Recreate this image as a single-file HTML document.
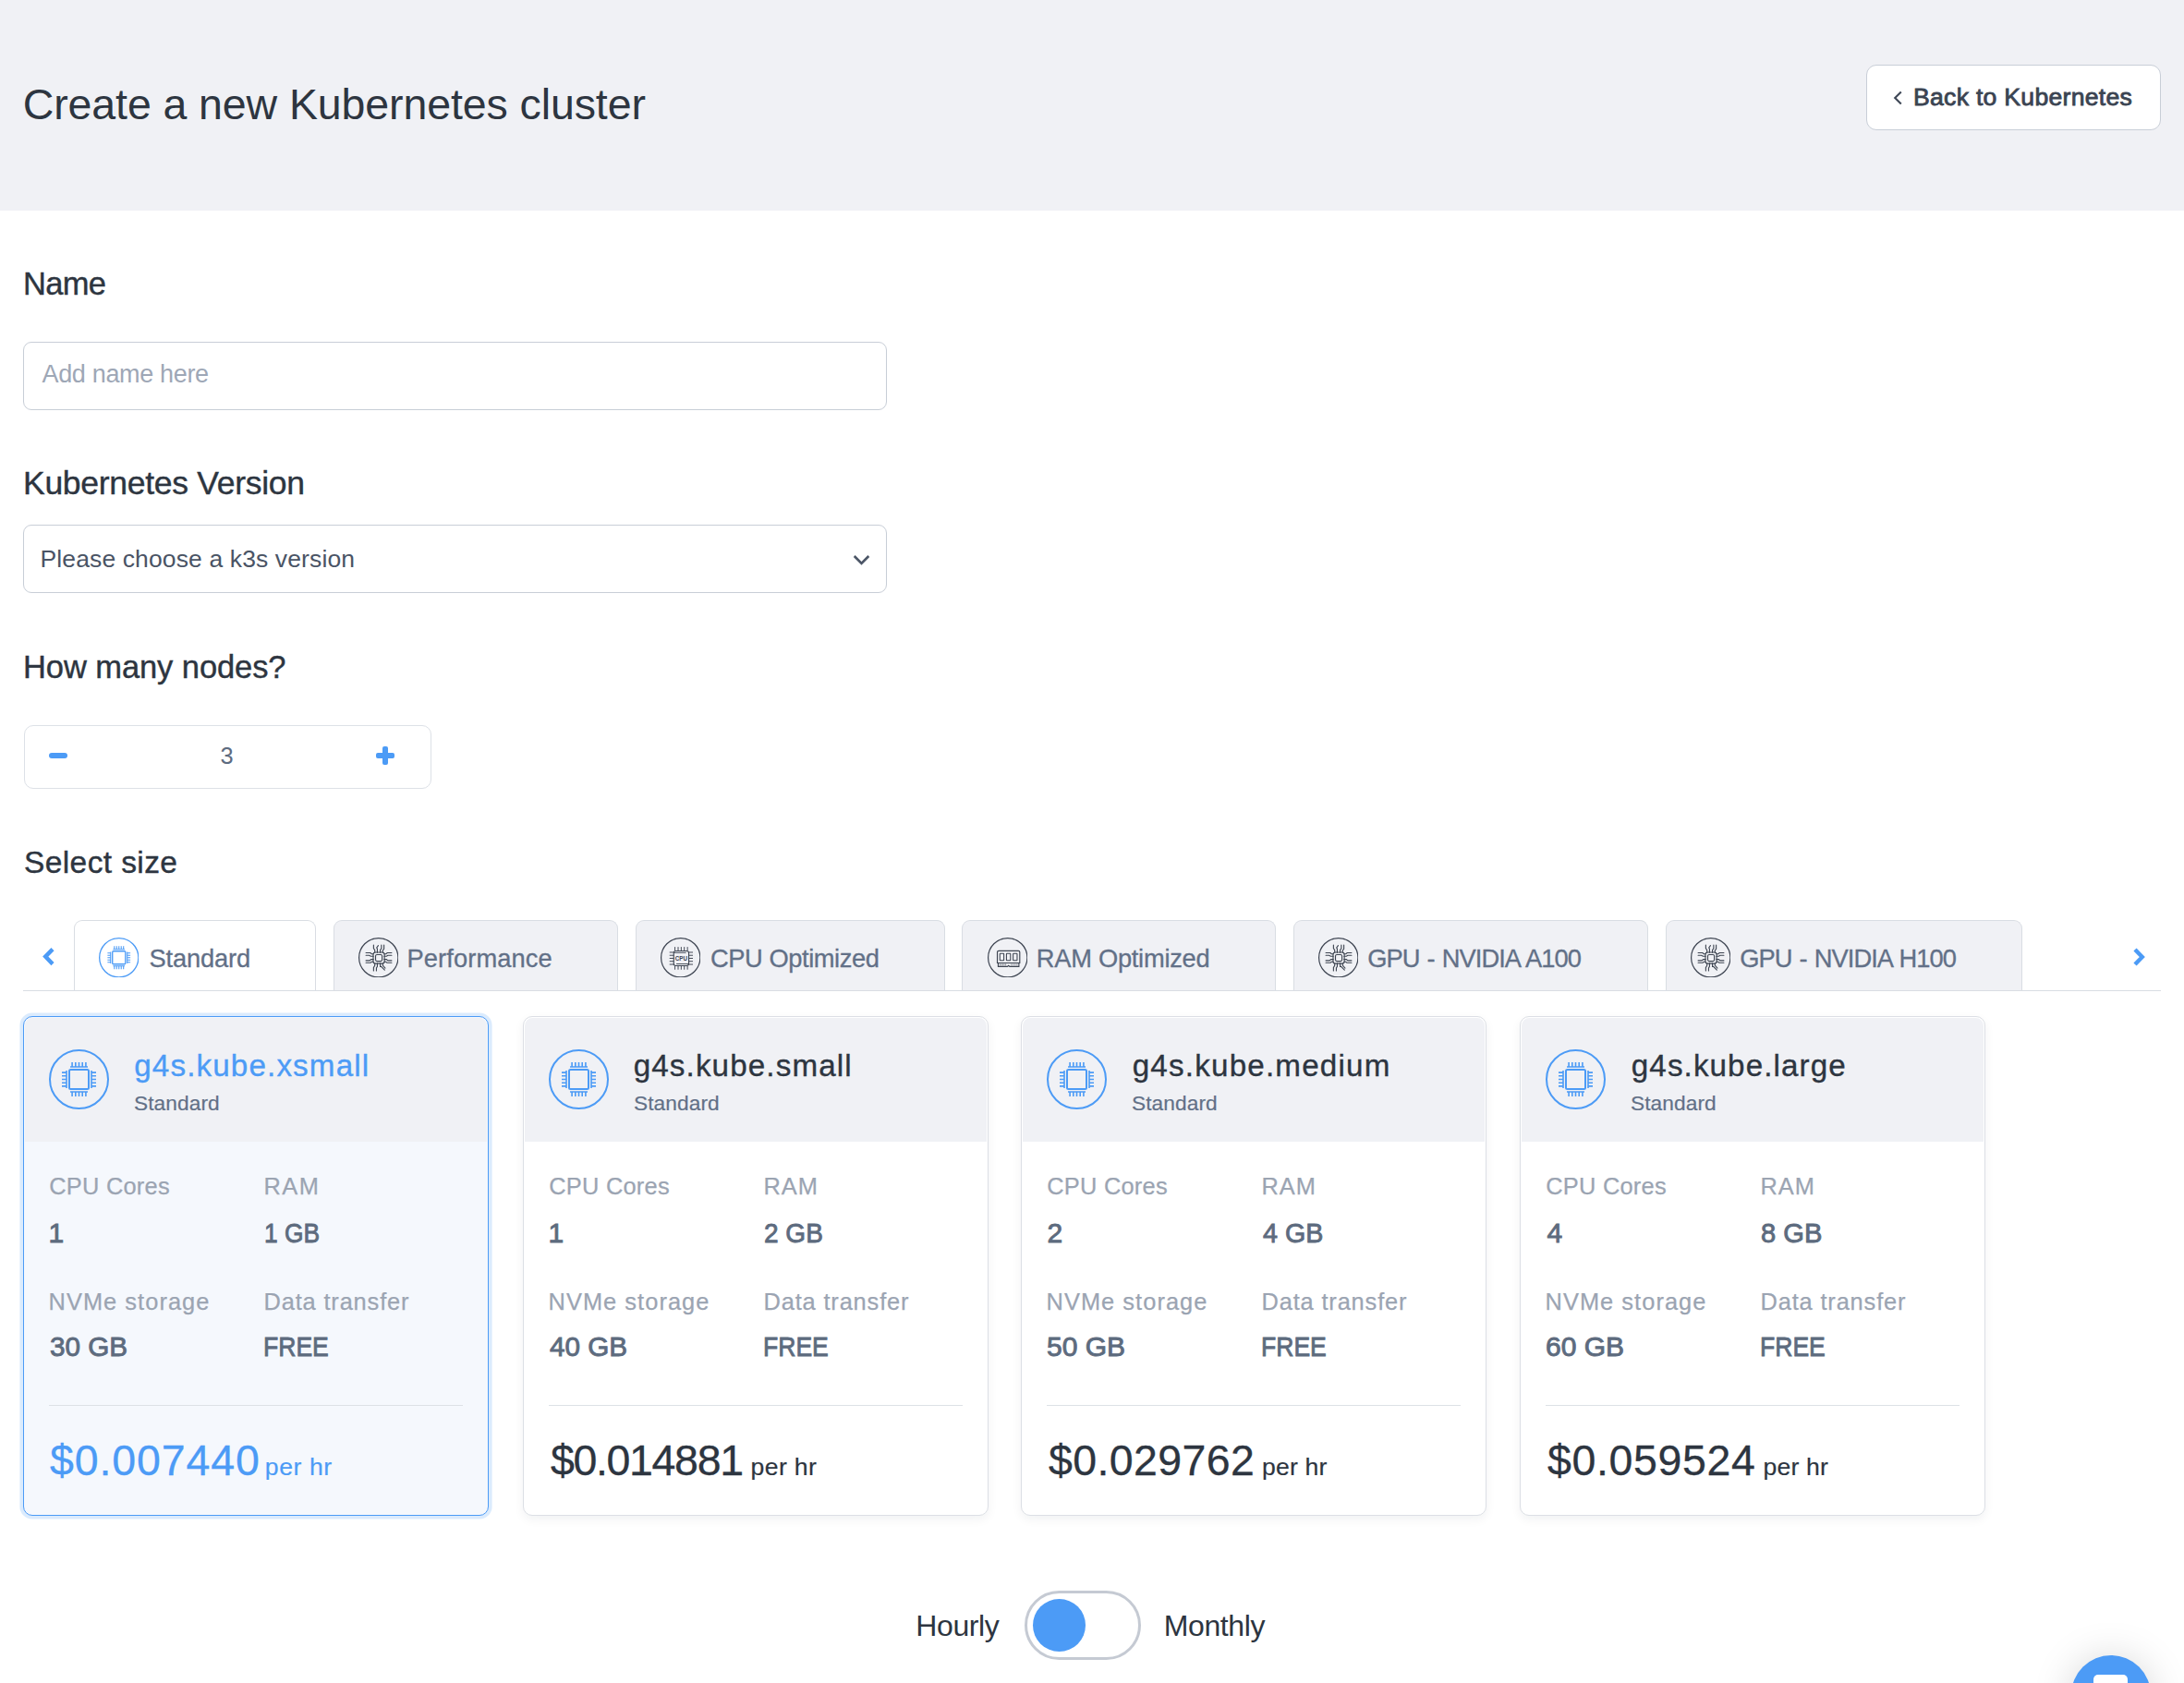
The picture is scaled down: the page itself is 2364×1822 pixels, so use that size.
<!DOCTYPE html>
<html><head><meta charset="utf-8"><title>Create a new Kubernetes cluster</title>
<style>
html,body{margin:0;padding:0;}
body{width:2364px;height:1822px;overflow:hidden;background:#ffffff;position:relative;font-family:"Liberation Sans",sans-serif;}
.a{position:absolute;box-sizing:border-box;}
.t{position:absolute;line-height:1;white-space:nowrap;}
</style></head><body>
<div class="a" style="left:0.00px;top:0.00px;width:2364.00px;height:228.00px;background:#f0f1f5;"></div>
<div class="t" id="title" style="left:24.70px;top:89.94px;font-size:46.50px;color:#2d3540;letter-spacing:-0.100px;">Create a new Kubernetes cluster</div>
<div class="a" style="left:2020.00px;top:70.00px;width:318.50px;height:71.00px;background:#fff;border:1.5px solid #c8ced7;border-radius:11px;"></div>
<svg class="a" style="left:2044px;top:94px" width="20" height="24" viewBox="0 0 20 24"><path d="M13.8 5.6 L7.2 12 L13.8 18.4" fill="none" stroke="#3e4756" stroke-width="2.1"/></svg>
<div class="t" id="btn" style="left:2071.00px;top:91.68px;font-size:26.60px;color:#3b4452;letter-spacing:0.282px;-webkit-text-stroke:0.85px #3b4452;">Back to Kubernetes</div>
<div class="t" id="name" style="left:25.00px;top:290.30px;font-size:34.50px;color:#2d3540;letter-spacing:-0.667px;-webkit-text-stroke:0.4px #2d3540;">Name</div>
<div class="a" style="left:25.00px;top:370.00px;width:935.00px;height:74.00px;background:#fff;border:1.5px solid #c8ced7;border-radius:9px;"></div>
<div class="t" id="ph" style="left:45.50px;top:392.14px;font-size:27.00px;color:#9ea7b6;letter-spacing:-0.333px;">Add name here</div>
<div class="t" id="kv" style="left:25.00px;top:505.70px;font-size:35.50px;color:#2d3540;letter-spacing:-0.282px;-webkit-text-stroke:0.4px #2d3540;">Kubernetes Version</div>
<div class="a" style="left:25.00px;top:568.00px;width:935.00px;height:73.50px;background:#fff;border:1.5px solid #c8ced7;border-radius:9px;"></div>
<div class="t" id="sel" style="left:43.50px;top:591.57px;font-size:26.50px;color:#4a5465;letter-spacing:0.123px;">Please choose a k3s version</div>
<svg class="a" style="left:920px;top:596px" width="24" height="20" viewBox="0 0 24 20"><path d="M4.7 6 L12.5 14 L20.3 6" fill="none" stroke="#4b5566" stroke-width="2.6"/></svg>
<div class="t" id="nodes" style="left:25.00px;top:704.55px;font-size:34.50px;color:#2d3540;letter-spacing:-0.086px;-webkit-text-stroke:0.4px #2d3540;">How many nodes?</div>
<div class="a" style="left:25.50px;top:784.50px;width:441.00px;height:69.00px;background:#fff;border:1.5px solid #dde1e7;border-radius:10px;"></div>
<div class="a" style="left:53.00px;top:814.50px;width:20.00px;height:6.80px;background:#4c9bf6;border-radius:3px;"></div>
<div class="t" id="three" style="left:238.50px;top:806.00px;font-size:25.40px;color:#5d6b80;">3</div>
<div class="a" style="left:407.00px;top:814.70px;width:20.00px;height:6.40px;background:#4c9bf6;border-radius:2px;"></div>
<div class="a" style="left:413.80px;top:808.00px;width:6.40px;height:19.50px;background:#4c9bf6;border-radius:2px;"></div>
<div class="t" id="selsize" style="left:26.00px;top:916.64px;font-size:33.50px;color:#2d3540;letter-spacing:0.400px;-webkit-text-stroke:0.4px #2d3540;">Select size</div>
<div class="a" style="left:25.00px;top:1071.50px;width:2314.00px;height:1.50px;background:#d9dde3;"></div>
<div class="a" style="left:79.50px;top:996.00px;width:262.25px;height:75.50px;background:#ffffff;border:1.5px solid #d9dde3;border-bottom:none;border-radius:9px 9px 0 0;"></div>
<svg class="a" style="left:106.75px;top:1014.75px" width="43.50" height="43.50" viewBox="0 0 65 65" stroke="#4c9bf6"><circle cx="32.5" cy="32.5" r="31.5" fill="none" stroke-width="2"/><rect x="22" y="22" width="21" height="21" rx="1.5" fill="none" stroke-width="2"/><path d="M23 19 H42 M23 46 H42 M19 23 V42 M46 23 V42" stroke-width="1.6" fill="none"/><path d="M25.1 14 V19 M25.1 46 V51 M14 25.1 H19 M46 25.1 H51 M28.8 14 V19 M28.8 46 V51 M14 28.8 H19 M46 28.8 H51 M32.5 14 V19 M32.5 46 V51 M14 32.5 H19 M46 32.5 H51 M36.2 14 V19 M36.2 46 V51 M14 36.2 H19 M46 36.2 H51 M39.9 14 V19 M39.9 46 V51 M14 39.9 H19 M46 39.9 H51 " stroke-width="1.6" fill="none"/></svg>
<div class="t" id="tab0" style="left:161.50px;top:1024.39px;font-size:27.30px;color:#627087;letter-spacing:-0.171px;-webkit-text-stroke:0.3px #627087;">Standard</div>
<div class="a" style="left:360.50px;top:996.00px;width:308.25px;height:75.50px;background:#f0f1f5;border:1.5px solid #d9dde3;border-bottom:none;border-radius:9px 9px 0 0;"></div>
<svg class="a" style="left:387.75px;top:1014.75px" width="43.50" height="43.50" viewBox="0 0 43 43" stroke="#3d4451"><circle cx="21.5" cy="21.5" r="20.9" fill="none" stroke-width="1.2"/><rect x="15.8" y="15.8" width="12" height="12" rx="2.2" fill="none" stroke-width="1.1"/><rect x="18.3" y="18.3" width="7" height="7" rx="1.5" fill="none" stroke-width="1.1"/><path d="M17.5 16 V13.5 L16.2 11.5 V8 M20.2 16 V12 L19.5 10.8 L21.2 8.5 M23.3 16 V13.2 L24.6 11.6 V8 M26 16 V13.8 L27.3 12.2 V8 M17.5 27.5 V30 L16.2 32 V35.5 M20.2 27.5 V31 L19.2 32.5 V35.5 M23.3 27.5 V31 H24.3 L28 34.8 M26 27.5 V29.8 L28.6 32.8 M16 17.5 H14 L12.8 16.3 H8 M16 20 H13.2 L11.5 19 H8 M16 23.3 H13.5 L12 24.6 H8 M16 26 H14 L13 27 H8 M27.5 17.5 H29.5 L30.8 16.3 H35.5 M27.5 20 H30 L31.5 19 H35.5 M27.5 23.3 H30 L31.5 24.6 H35.5 M27.5 26 H29.5 L30.5 27 H35.5 " fill="none" stroke-width="1.1" stroke-linecap="round"/></svg>
<div class="t" id="tab1" style="left:440.50px;top:1024.39px;font-size:27.30px;color:#627087;letter-spacing:0.100px;-webkit-text-stroke:0.3px #627087;">Performance</div>
<div class="a" style="left:687.50px;top:996.00px;width:335.00px;height:75.50px;background:#f0f1f5;border:1.5px solid #d9dde3;border-bottom:none;border-radius:9px 9px 0 0;"></div>
<svg class="a" style="left:714.75px;top:1014.75px" width="43.50" height="43.50" viewBox="0 0 43 43" stroke="#3d4451"><circle cx="21.5" cy="21.5" r="20.9" fill="none" stroke-width="1.2"/><rect x="14.1" y="14.3" width="16.1" height="15.8" rx="2.2" fill="none" stroke-width="1.1"/><path d="M14.6 16.2 H27.3 M16.9 28.2 H29.8" fill="none" stroke-width="0.9"/><path d="M15.4 10 V14 M15.4 30.3 V34.3 M18.8 10 V14 M18.8 30.3 V34.3 M22.1 10 V14 M22.1 30.3 V34.3 M25.4 10 V14 M25.4 30.3 V34.3 M28.8 10 V14 M28.8 30.3 V34.3 M9.6 15.8 H14 M30.2 15.8 H34.6 M9.6 19.0 H14 M30.2 19.0 H34.6 M9.6 22.2 H14 M30.2 22.2 H34.6 M9.6 25.4 H14 M30.2 25.4 H34.6 M9.6 28.7 H14 M30.2 28.7 H34.6 " fill="none" stroke-width="0.95"/><text x="22.2" y="24.3" text-anchor="middle" font-family="Liberation Sans" font-weight="700" font-size="6.2" fill="#3d4451" stroke="none">CPU</text></svg>
<div class="t" id="tab2" style="left:769.00px;top:1024.39px;font-size:27.30px;color:#627087;letter-spacing:-0.433px;-webkit-text-stroke:0.3px #627087;">CPU Optimized</div>
<div class="a" style="left:1041.25px;top:996.00px;width:339.50px;height:75.50px;background:#f0f1f5;border:1.5px solid #d9dde3;border-bottom:none;border-radius:9px 9px 0 0;"></div>
<svg class="a" style="left:1068.50px;top:1014.75px" width="43.50" height="43.50" viewBox="0 0 43 43" stroke="#3d4451"><circle cx="21.5" cy="21.5" r="20.9" fill="none" stroke-width="1.2"/><path d="M10.4 27.2 V15.6 Q10.4 14.2 11.9 14.2 H33 Q34.4 14.2 34.4 15.6 V27.2 Z" fill="none" stroke-width="1.15"/><rect x="13.1" y="17.1" width="4.3" height="7.3" rx="0.4" fill="none" stroke-width="1.05"/><rect x="20.2" y="17.1" width="4.3" height="7.3" rx="0.4" fill="none" stroke-width="1.05"/><rect x="27.3" y="17.1" width="4.3" height="7.3" rx="0.4" fill="none" stroke-width="1.05"/><path d="M11.3 27.4 V31 H21.2 L22.4 29.9 L23.6 31 H33.5 V27.4" fill="none" stroke-width="1.1"/><path d="M13 28.2 V30 M14.6 28.2 V30 M16.2 28.2 V30 M17.8 28.2 V30 M19.4 28.2 V30 M25.5 28.2 V30 M27.5 28.2 V30 M29.5 28.2 V30 M31.5 28.2 V30" fill="none" stroke-width="0.6"/></svg>
<div class="t" id="tab3" style="left:1121.75px;top:1024.39px;font-size:27.30px;color:#627087;letter-spacing:-0.267px;-webkit-text-stroke:0.3px #627087;">RAM Optimized</div>
<div class="a" style="left:1399.50px;top:996.00px;width:384.25px;height:75.50px;background:#f0f1f5;border:1.5px solid #d9dde3;border-bottom:none;border-radius:9px 9px 0 0;"></div>
<svg class="a" style="left:1426.75px;top:1014.75px" width="43.50" height="43.50" viewBox="0 0 43 43" stroke="#3d4451"><circle cx="21.5" cy="21.5" r="20.9" fill="none" stroke-width="1.2"/><rect x="15.8" y="15.8" width="12" height="12" rx="2.2" fill="none" stroke-width="1.1"/><rect x="18.3" y="18.3" width="7" height="7" rx="1.5" fill="none" stroke-width="1.1"/><path d="M17.5 16 V13.5 L16.2 11.5 V8 M20.2 16 V12 L19.5 10.8 L21.2 8.5 M23.3 16 V13.2 L24.6 11.6 V8 M26 16 V13.8 L27.3 12.2 V8 M17.5 27.5 V30 L16.2 32 V35.5 M20.2 27.5 V31 L19.2 32.5 V35.5 M23.3 27.5 V31 H24.3 L28 34.8 M26 27.5 V29.8 L28.6 32.8 M16 17.5 H14 L12.8 16.3 H8 M16 20 H13.2 L11.5 19 H8 M16 23.3 H13.5 L12 24.6 H8 M16 26 H14 L13 27 H8 M27.5 17.5 H29.5 L30.8 16.3 H35.5 M27.5 20 H30 L31.5 19 H35.5 M27.5 23.3 H30 L31.5 24.6 H35.5 M27.5 26 H29.5 L30.5 27 H35.5 " fill="none" stroke-width="1.1" stroke-linecap="round"/></svg>
<div class="t" id="tab4" style="left:1480.25px;top:1024.39px;font-size:27.30px;color:#627087;letter-spacing:-0.975px;-webkit-text-stroke:0.3px #627087;word-spacing:1.5px;">GPU - NVIDIA A100</div>
<div class="a" style="left:1802.50px;top:996.00px;width:386.25px;height:75.50px;background:#f0f1f5;border:1.5px solid #d9dde3;border-bottom:none;border-radius:9px 9px 0 0;"></div>
<svg class="a" style="left:1829.75px;top:1014.75px" width="43.50" height="43.50" viewBox="0 0 43 43" stroke="#3d4451"><circle cx="21.5" cy="21.5" r="20.9" fill="none" stroke-width="1.2"/><rect x="15.8" y="15.8" width="12" height="12" rx="2.2" fill="none" stroke-width="1.1"/><rect x="18.3" y="18.3" width="7" height="7" rx="1.5" fill="none" stroke-width="1.1"/><path d="M17.5 16 V13.5 L16.2 11.5 V8 M20.2 16 V12 L19.5 10.8 L21.2 8.5 M23.3 16 V13.2 L24.6 11.6 V8 M26 16 V13.8 L27.3 12.2 V8 M17.5 27.5 V30 L16.2 32 V35.5 M20.2 27.5 V31 L19.2 32.5 V35.5 M23.3 27.5 V31 H24.3 L28 34.8 M26 27.5 V29.8 L28.6 32.8 M16 17.5 H14 L12.8 16.3 H8 M16 20 H13.2 L11.5 19 H8 M16 23.3 H13.5 L12 24.6 H8 M16 26 H14 L13 27 H8 M27.5 17.5 H29.5 L30.8 16.3 H35.5 M27.5 20 H30 L31.5 19 H35.5 M27.5 23.3 H30 L31.5 24.6 H35.5 M27.5 26 H29.5 L30.5 27 H35.5 " fill="none" stroke-width="1.1" stroke-linecap="round"/></svg>
<div class="t" id="tab5" style="left:1883.25px;top:1024.39px;font-size:27.30px;color:#627087;letter-spacing:-0.975px;-webkit-text-stroke:0.3px #627087;word-spacing:1.5px;">GPU - NVIDIA H100</div>
<svg class="a" style="left:40px;top:1020px" width="26" height="32" viewBox="0 0 26 32"><path d="M17 7.6 L9.2 15.6 L17 23.6" fill="none" stroke="#4c9bf6" stroke-width="4.4"/></svg>
<svg class="a" style="left:2302px;top:1020px" width="26" height="32" viewBox="0 0 26 32"><path d="M9 8 L16.8 16 L9 24" fill="none" stroke="#4c9bf6" stroke-width="4.4"/></svg>
<div class="a" style="left:25.00px;top:1100.00px;width:503.60px;height:540.70px;background:#f5f8fd;border:1.5px solid #4c9bf6;border-radius:10px;box-shadow:0 0 0 3.6px rgba(76,155,246,0.2);"></div>
<div class="a" style="left:26.50px;top:1101.50px;width:500.60px;height:134.20px;background:#f0f1f5;border-radius:8.5px 8.5px 0 0;"></div>
<svg class="a" style="left:52.95px;top:1135.85px" width="65.00" height="65.00" viewBox="0 0 65 65" stroke="#4c9bf6"><circle cx="32.5" cy="32.5" r="31.5" fill="none" stroke-width="2"/><rect x="22" y="22" width="21" height="21" rx="1.5" fill="none" stroke-width="2"/><path d="M23 19 H42 M23 46 H42 M19 23 V42 M46 23 V42" stroke-width="1.6" fill="none"/><path d="M25.1 14 V19 M25.1 46 V51 M14 25.1 H19 M46 25.1 H51 M28.8 14 V19 M28.8 46 V51 M14 28.8 H19 M46 28.8 H51 M32.5 14 V19 M32.5 46 V51 M14 32.5 H19 M46 32.5 H51 M36.2 14 V19 M36.2 46 V51 M14 36.2 H19 M46 36.2 H51 M39.9 14 V19 M39.9 46 V51 M14 39.9 H19 M46 39.9 H51 " stroke-width="1.6" fill="none"/></svg>
<div class="t" id="c0title" style="left:145.25px;top:1136.90px;font-size:33.20px;color:#4c9bf6;letter-spacing:1.136px;-webkit-text-stroke:0.35px #4c9bf6;">g4s.kube.xsmall</div>
<div class="t" id="c0sub" style="left:145.00px;top:1182.78px;font-size:22.70px;color:#627087;letter-spacing:0.086px;-webkit-text-stroke:0.2px #627087;">Standard</div>
<div class="t" id="c0l1" style="left:53.25px;top:1272.25px;font-size:25.40px;color:#9ba4b2;letter-spacing:0.250px;-webkit-text-stroke:0.25px #9ba4b2;">CPU Cores</div>
<div class="t" id="c0l2" style="left:285.50px;top:1272.25px;font-size:25.40px;color:#9ba4b2;letter-spacing:1.500px;-webkit-text-stroke:0.25px #9ba4b2;">RAM</div>
<div class="t" id="c0v1" style="left:52.50px;top:1319.61px;font-size:30.00px;color:#5d6b7e;-webkit-text-stroke:0.9px #5d6b7e;">1</div>
<div class="t" id="c0v2" style="left:286.00px;top:1319.61px;font-size:30.00px;color:#5d6b7e;-webkit-text-stroke:0.9px #5d6b7e;transform:scaleX(0.8788);transform-origin:0 0;">1 GB</div>
<div class="t" id="c0l3" style="left:52.50px;top:1396.50px;font-size:25.40px;color:#9ba4b2;letter-spacing:1.055px;-webkit-text-stroke:0.25px #9ba4b2;">NVMe storage</div>
<div class="t" id="c0l4" style="left:285.50px;top:1396.50px;font-size:25.40px;color:#9ba4b2;letter-spacing:0.850px;-webkit-text-stroke:0.25px #9ba4b2;">Data transfer</div>
<div class="t" id="c0v3" style="left:54.00px;top:1443.36px;font-size:30.00px;color:#5d6b7e;-webkit-text-stroke:0.9px #5d6b7e;transform:scaleX(0.9881);transform-origin:0 0;">30 GB</div>
<div class="t" id="c0v4" style="left:285.00px;top:1443.36px;font-size:30.00px;color:#5d6b7e;-webkit-text-stroke:0.9px #5d6b7e;transform:scaleX(0.8848);transform-origin:0 0;">FREE</div>
<div class="a" style="left:53.00px;top:1520.50px;width:447.50px;height:1.50px;background:#dde1e6;"></div>
<div class="t" id="c0price" style="left:54.00px;top:1557.74px;font-size:46.50px;color:#4c9bf6;letter-spacing:0.875px;-webkit-text-stroke:0.3px #4c9bf6;">$0.007440</div>
<div class="t" id="c0perhr" style="left:286.75px;top:1574.58px;font-size:26.60px;color:#4c9bf6;letter-spacing:0.600px;-webkit-text-stroke:0.2px #4c9bf6;">per hr</div>
<div class="a" style="left:566.00px;top:1100.00px;width:503.60px;height:540.70px;background:#fff;border:1.5px solid #dcdfe5;border-radius:10px;box-shadow:0 4px 11px rgba(20,30,50,0.06);"></div>
<div class="a" style="left:567.50px;top:1101.50px;width:500.60px;height:134.20px;background:#f0f1f5;border-radius:8.5px 8.5px 0 0;"></div>
<svg class="a" style="left:593.95px;top:1135.85px" width="65.00" height="65.00" viewBox="0 0 65 65" stroke="#4c9bf6"><circle cx="32.5" cy="32.5" r="31.5" fill="none" stroke-width="2"/><rect x="22" y="22" width="21" height="21" rx="1.5" fill="none" stroke-width="2"/><path d="M23 19 H42 M23 46 H42 M19 23 V42 M46 23 V42" stroke-width="1.6" fill="none"/><path d="M25.1 14 V19 M25.1 46 V51 M14 25.1 H19 M46 25.1 H51 M28.8 14 V19 M28.8 46 V51 M14 28.8 H19 M46 28.8 H51 M32.5 14 V19 M32.5 46 V51 M14 32.5 H19 M46 32.5 H51 M36.2 14 V19 M36.2 46 V51 M14 36.2 H19 M46 36.2 H51 M39.9 14 V19 M39.9 46 V51 M14 39.9 H19 M46 39.9 H51 " stroke-width="1.6" fill="none"/></svg>
<div class="t" id="c1title" style="left:685.70px;top:1136.90px;font-size:33.20px;color:#2d3540;letter-spacing:1.119px;-webkit-text-stroke:0.35px #2d3540;">g4s.kube.small</div>
<div class="t" id="c1sub" style="left:686.00px;top:1182.78px;font-size:22.70px;color:#627087;letter-spacing:0.086px;-webkit-text-stroke:0.2px #627087;">Standard</div>
<div class="t" id="c1l1" style="left:594.25px;top:1272.25px;font-size:25.40px;color:#9ba4b2;letter-spacing:0.250px;-webkit-text-stroke:0.25px #9ba4b2;">CPU Cores</div>
<div class="t" id="c1l2" style="left:826.50px;top:1272.25px;font-size:25.40px;color:#9ba4b2;letter-spacing:1.000px;-webkit-text-stroke:0.25px #9ba4b2;">RAM</div>
<div class="t" id="c1v1" style="left:593.50px;top:1319.61px;font-size:30.00px;color:#5d6b7e;-webkit-text-stroke:0.9px #5d6b7e;">1</div>
<div class="t" id="c1v2" style="left:827.00px;top:1319.61px;font-size:30.00px;color:#5d6b7e;-webkit-text-stroke:0.9px #5d6b7e;transform:scaleX(0.9334);transform-origin:0 0;">2 GB</div>
<div class="t" id="c1l3" style="left:593.50px;top:1396.50px;font-size:25.40px;color:#9ba4b2;letter-spacing:1.055px;-webkit-text-stroke:0.25px #9ba4b2;">NVMe storage</div>
<div class="t" id="c1l4" style="left:826.50px;top:1396.50px;font-size:25.40px;color:#9ba4b2;letter-spacing:0.850px;-webkit-text-stroke:0.25px #9ba4b2;">Data transfer</div>
<div class="t" id="c1v3" style="left:595.00px;top:1443.36px;font-size:30.00px;color:#5d6b7e;-webkit-text-stroke:0.9px #5d6b7e;transform:scaleX(0.9881);transform-origin:0 0;">40 GB</div>
<div class="t" id="c1v4" style="left:826.00px;top:1443.36px;font-size:30.00px;color:#5d6b7e;-webkit-text-stroke:0.9px #5d6b7e;transform:scaleX(0.8848);transform-origin:0 0;">FREE</div>
<div class="a" style="left:594.00px;top:1520.50px;width:447.50px;height:1.50px;background:#dde1e6;"></div>
<div class="t" id="c1price" style="left:596.00px;top:1557.74px;font-size:46.50px;color:#2d3540;letter-spacing:-1.350px;-webkit-text-stroke:0.3px #2d3540;">$0.014881</div>
<div class="t" id="c1perhr" style="left:812.60px;top:1574.58px;font-size:26.60px;color:#2d3540;letter-spacing:0.360px;-webkit-text-stroke:0.2px #2d3540;">per hr</div>
<div class="a" style="left:1105.00px;top:1100.00px;width:503.60px;height:540.70px;background:#fff;border:1.5px solid #dcdfe5;border-radius:10px;box-shadow:0 4px 11px rgba(20,30,50,0.06);"></div>
<div class="a" style="left:1106.50px;top:1101.50px;width:500.60px;height:134.20px;background:#f0f1f5;border-radius:8.5px 8.5px 0 0;"></div>
<svg class="a" style="left:1132.95px;top:1135.85px" width="65.00" height="65.00" viewBox="0 0 65 65" stroke="#4c9bf6"><circle cx="32.5" cy="32.5" r="31.5" fill="none" stroke-width="2"/><rect x="22" y="22" width="21" height="21" rx="1.5" fill="none" stroke-width="2"/><path d="M23 19 H42 M23 46 H42 M19 23 V42 M46 23 V42" stroke-width="1.6" fill="none"/><path d="M25.1 14 V19 M25.1 46 V51 M14 25.1 H19 M46 25.1 H51 M28.8 14 V19 M28.8 46 V51 M14 28.8 H19 M46 28.8 H51 M32.5 14 V19 M32.5 46 V51 M14 32.5 H19 M46 32.5 H51 M36.2 14 V19 M36.2 46 V51 M14 36.2 H19 M46 36.2 H51 M39.9 14 V19 M39.9 46 V51 M14 39.9 H19 M46 39.9 H51 " stroke-width="1.6" fill="none"/></svg>
<div class="t" id="c2title" style="left:1225.70px;top:1136.90px;font-size:33.20px;color:#2d3540;letter-spacing:1.193px;-webkit-text-stroke:0.35px #2d3540;">g4s.kube.medium</div>
<div class="t" id="c2sub" style="left:1225.00px;top:1182.78px;font-size:22.70px;color:#627087;letter-spacing:0.086px;-webkit-text-stroke:0.2px #627087;">Standard</div>
<div class="t" id="c2l1" style="left:1133.25px;top:1272.25px;font-size:25.40px;color:#9ba4b2;letter-spacing:0.250px;-webkit-text-stroke:0.25px #9ba4b2;">CPU Cores</div>
<div class="t" id="c2l2" style="left:1365.50px;top:1272.25px;font-size:25.40px;color:#9ba4b2;letter-spacing:1.000px;-webkit-text-stroke:0.25px #9ba4b2;">RAM</div>
<div class="t" id="c2v1" style="left:1133.50px;top:1319.61px;font-size:30.00px;color:#5d6b7e;-webkit-text-stroke:0.9px #5d6b7e;">2</div>
<div class="t" id="c2v2" style="left:1367.00px;top:1319.61px;font-size:30.00px;color:#5d6b7e;-webkit-text-stroke:0.9px #5d6b7e;transform:scaleX(0.9555);transform-origin:0 0;">4 GB</div>
<div class="t" id="c2l3" style="left:1132.50px;top:1396.50px;font-size:25.40px;color:#9ba4b2;letter-spacing:1.055px;-webkit-text-stroke:0.25px #9ba4b2;">NVMe storage</div>
<div class="t" id="c2l4" style="left:1365.50px;top:1396.50px;font-size:25.40px;color:#9ba4b2;letter-spacing:0.850px;-webkit-text-stroke:0.25px #9ba4b2;">Data transfer</div>
<div class="t" id="c2v3" style="left:1133.00px;top:1443.36px;font-size:30.00px;color:#5d6b7e;-webkit-text-stroke:0.9px #5d6b7e;transform:scaleX(1.0001);transform-origin:0 0;">50 GB</div>
<div class="t" id="c2v4" style="left:1365.00px;top:1443.36px;font-size:30.00px;color:#5d6b7e;-webkit-text-stroke:0.9px #5d6b7e;transform:scaleX(0.8848);transform-origin:0 0;">FREE</div>
<div class="a" style="left:1133.00px;top:1520.50px;width:447.50px;height:1.50px;background:#dde1e6;"></div>
<div class="t" id="c2price" style="left:1135.00px;top:1557.74px;font-size:46.50px;color:#2d3540;letter-spacing:0.375px;-webkit-text-stroke:0.3px #2d3540;">$0.029762</div>
<div class="t" id="c2perhr" style="left:1366.00px;top:1574.58px;font-size:26.60px;color:#2d3540;letter-spacing:0.200px;-webkit-text-stroke:0.2px #2d3540;">per hr</div>
<div class="a" style="left:1645.00px;top:1100.00px;width:503.60px;height:540.70px;background:#fff;border:1.5px solid #dcdfe5;border-radius:10px;box-shadow:0 4px 11px rgba(20,30,50,0.06);"></div>
<div class="a" style="left:1646.50px;top:1101.50px;width:500.60px;height:134.20px;background:#f0f1f5;border-radius:8.5px 8.5px 0 0;"></div>
<svg class="a" style="left:1672.95px;top:1135.85px" width="65.00" height="65.00" viewBox="0 0 65 65" stroke="#4c9bf6"><circle cx="32.5" cy="32.5" r="31.5" fill="none" stroke-width="2"/><rect x="22" y="22" width="21" height="21" rx="1.5" fill="none" stroke-width="2"/><path d="M23 19 H42 M23 46 H42 M19 23 V42 M46 23 V42" stroke-width="1.6" fill="none"/><path d="M25.1 14 V19 M25.1 46 V51 M14 25.1 H19 M46 25.1 H51 M28.8 14 V19 M28.8 46 V51 M14 28.8 H19 M46 28.8 H51 M32.5 14 V19 M32.5 46 V51 M14 32.5 H19 M46 32.5 H51 M36.2 14 V19 M36.2 46 V51 M14 36.2 H19 M46 36.2 H51 M39.9 14 V19 M39.9 46 V51 M14 39.9 H19 M46 39.9 H51 " stroke-width="1.6" fill="none"/></svg>
<div class="t" id="c3title" style="left:1765.80px;top:1136.90px;font-size:33.20px;color:#2d3540;letter-spacing:1.088px;-webkit-text-stroke:0.35px #2d3540;">g4s.kube.large</div>
<div class="t" id="c3sub" style="left:1765.00px;top:1182.78px;font-size:22.70px;color:#627087;letter-spacing:0.086px;-webkit-text-stroke:0.2px #627087;">Standard</div>
<div class="t" id="c3l1" style="left:1673.25px;top:1272.25px;font-size:25.40px;color:#9ba4b2;letter-spacing:0.250px;-webkit-text-stroke:0.25px #9ba4b2;">CPU Cores</div>
<div class="t" id="c3l2" style="left:1905.50px;top:1272.25px;font-size:25.40px;color:#9ba4b2;letter-spacing:1.000px;-webkit-text-stroke:0.25px #9ba4b2;">RAM</div>
<div class="t" id="c3v1" style="left:1674.50px;top:1319.61px;font-size:30.00px;color:#5d6b7e;-webkit-text-stroke:0.9px #5d6b7e;">4</div>
<div class="t" id="c3v2" style="left:1906.00px;top:1319.61px;font-size:30.00px;color:#5d6b7e;-webkit-text-stroke:0.9px #5d6b7e;transform:scaleX(0.9708);transform-origin:0 0;">8 GB</div>
<div class="t" id="c3l3" style="left:1672.50px;top:1396.50px;font-size:25.40px;color:#9ba4b2;letter-spacing:1.055px;-webkit-text-stroke:0.25px #9ba4b2;">NVMe storage</div>
<div class="t" id="c3l4" style="left:1905.50px;top:1396.50px;font-size:25.40px;color:#9ba4b2;letter-spacing:0.850px;-webkit-text-stroke:0.25px #9ba4b2;">Data transfer</div>
<div class="t" id="c3v3" style="left:1673.00px;top:1443.36px;font-size:30.00px;color:#5d6b7e;-webkit-text-stroke:0.9px #5d6b7e;transform:scaleX(1.0001);transform-origin:0 0;">60 GB</div>
<div class="t" id="c3v4" style="left:1905.00px;top:1443.36px;font-size:30.00px;color:#5d6b7e;-webkit-text-stroke:0.9px #5d6b7e;transform:scaleX(0.8848);transform-origin:0 0;">FREE</div>
<div class="a" style="left:1673.00px;top:1520.50px;width:447.50px;height:1.50px;background:#dde1e6;"></div>
<div class="t" id="c3price" style="left:1675.00px;top:1557.74px;font-size:46.50px;color:#2d3540;letter-spacing:0.625px;-webkit-text-stroke:0.3px #2d3540;">$0.059524</div>
<div class="t" id="c3perhr" style="left:1908.50px;top:1574.58px;font-size:26.60px;color:#2d3540;letter-spacing:0.200px;-webkit-text-stroke:0.2px #2d3540;">per hr</div>
<div class="t" id="hourly" style="left:991.30px;top:1743.51px;font-size:32.00px;color:#2d3540;letter-spacing:-0.400px;">Hourly</div>
<div class="a" style="left:1109.00px;top:1722.00px;width:126.00px;height:75.00px;background:#fff;border:3px solid #c5cad3;border-radius:38px;"></div>
<div class="a" style="left:1117.90px;top:1730.70px;width:57.00px;height:57.00px;background:#4c9bf6;border-radius:50%;"></div>
<div class="t" id="monthly" style="left:1259.80px;top:1743.51px;font-size:32.00px;color:#2d3540;letter-spacing:-0.400px;">Monthly</div>
<div class="a" style="left:2242.00px;top:1792.00px;width:86.00px;height:86.00px;background:#4c9bf6;border-radius:50%;box-shadow:0 3px 44px rgba(0,0,0,0.17);"></div>
<div class="a" style="left:2265.75px;top:1813.00px;width:37.50px;height:30.00px;background:#fff;border-radius:5px;"></div>
</body></html>
